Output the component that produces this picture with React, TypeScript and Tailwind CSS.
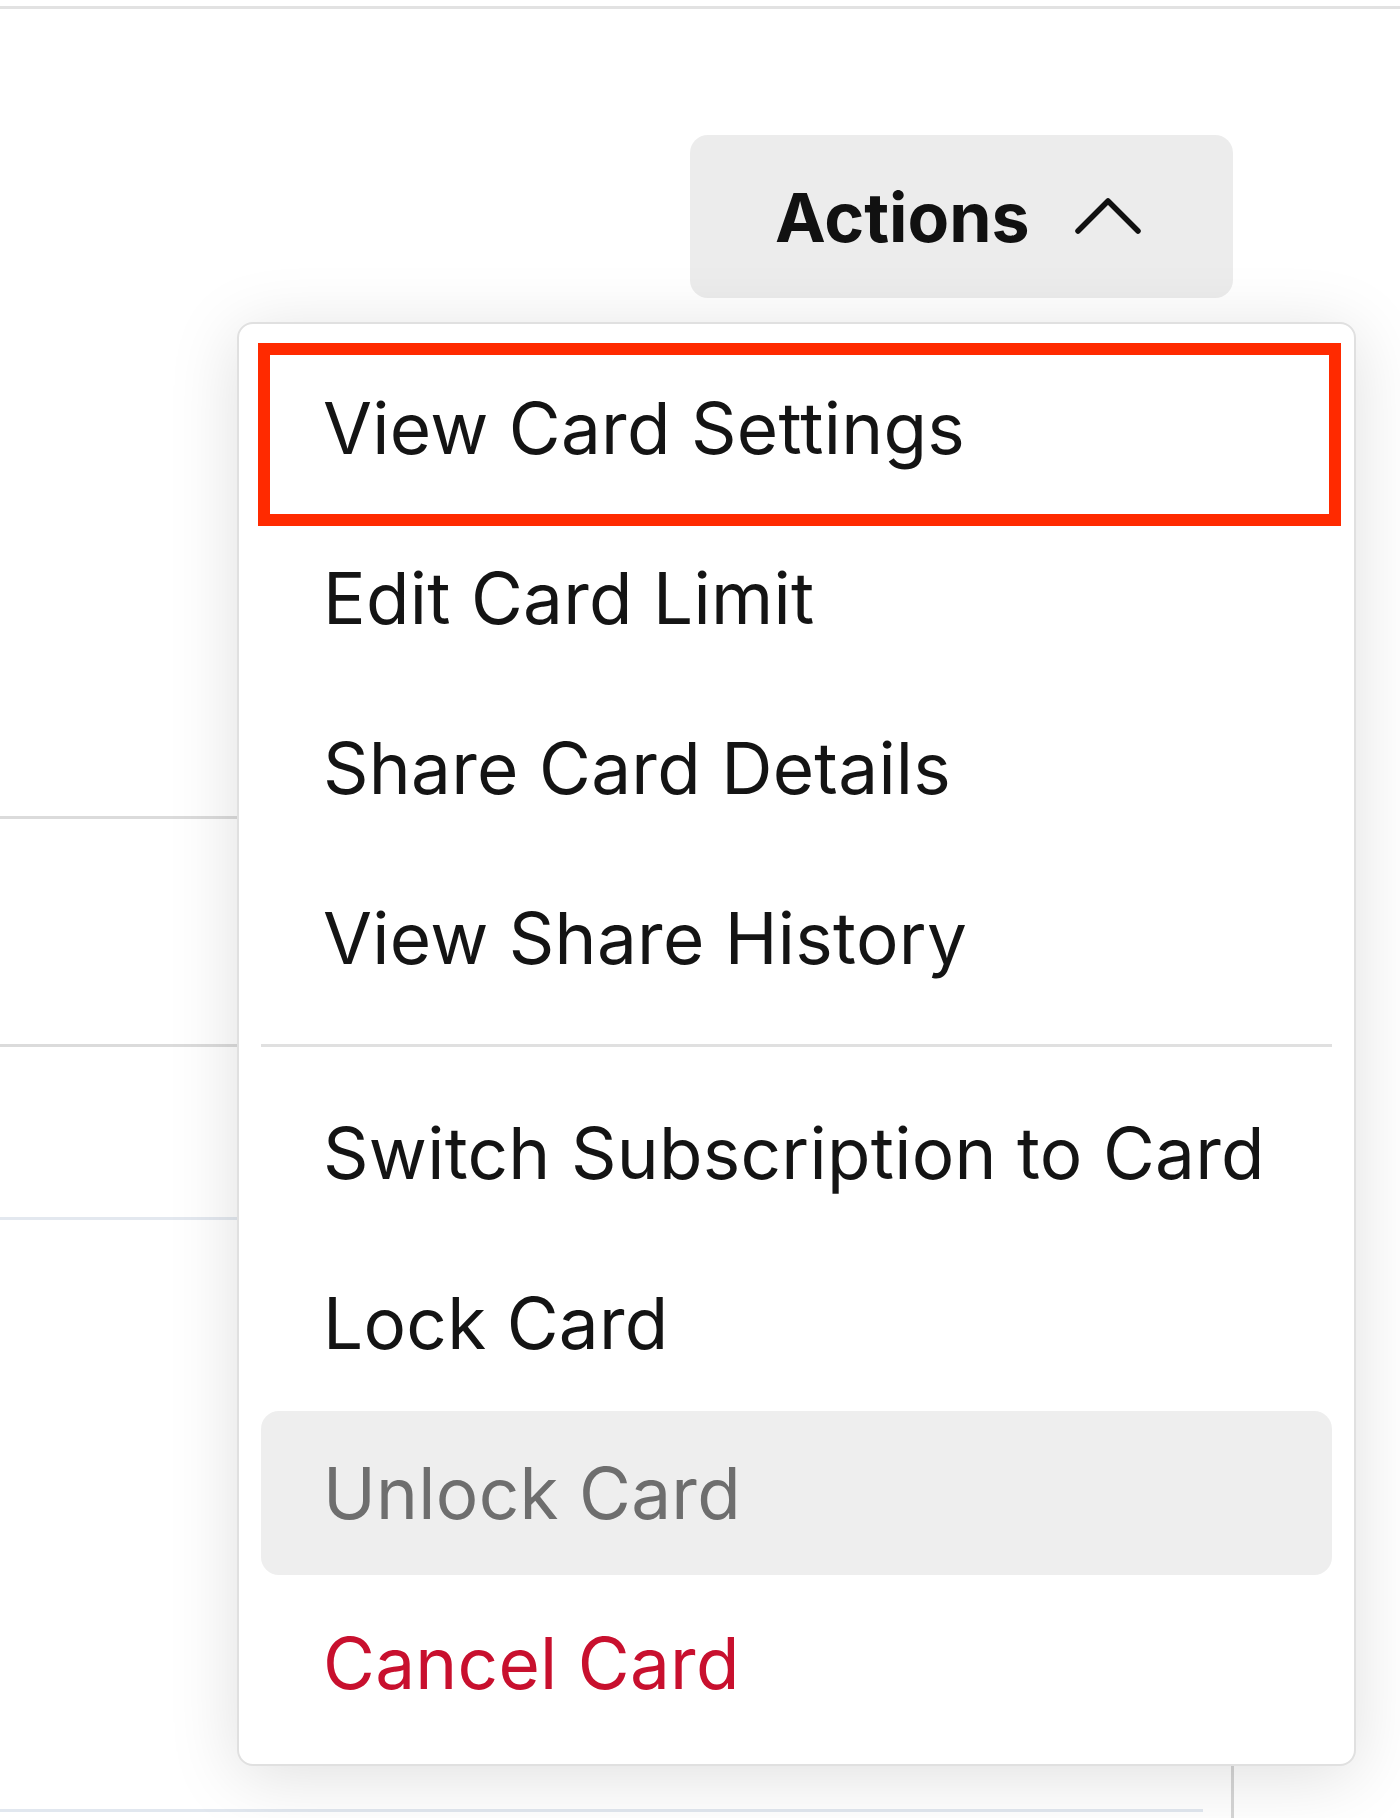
import React from "react";

const items = [
  "View Card Settings",
  "Edit Card Limit",
  "Share Card Details",
  "View Share History",
];
const items2 = ["Switch Subscription to Card", "Lock Card"];

function Row({ label, className = "" }: { label: string; className?: string }) {
  return (
    <div
      className={
        "h-[164px] leading-[164px] pl-[62px] rounded-[18px] text-[71px] tracking-[0.004em] whitespace-nowrap " +
        className
      }
    >
      {label}
    </div>
  );
}

export default function App() {
  return (
    <div className="relative w-[1400px] h-[1818px] bg-white overflow-hidden font-['Inter',sans-serif] text-[#141414]">
      {/* top rule */}
      <div className="pt-[6px]">
        <div className="h-[3px] bg-[#e2e2e2]" />
      </div>

      {/* header with button */}
      <div className="pt-[126px] pl-[690px]">
        <button className="flex h-[163px] w-[543px] items-center gap-[44px] rounded-[18px] bg-[#ececec] pl-[85px] text-[68px] font-bold leading-none text-[#111]">
          <span>Actions</span>
          <svg width="68" height="38" viewBox="0 0 68 38" fill="none" className="mt-[-2px]">
            <polyline
              points="4,34 34,4 64,34"
              stroke="#111"
              strokeWidth="5.5"
              strokeLinecap="round"
              strokeLinejoin="round"
            />
          </svg>
        </button>
      </div>

      {/* background table rows */}
      <div className="h-[518px]" />
      <div className="h-[3px] w-[1232px] bg-[#dbdbdb]" />
      <div className="h-[225px]" />
      <div className="h-[3px] w-[1232px] bg-[#dbdbdb]" />
      <div className="h-[170px]" />
      <div className="h-[3px] w-[1232px] bg-[#e3e8ef]" />
      <div className="flex h-[598px]">
        <div className="flex w-[1231px] flex-col justify-end">
          <div className="mb-[6px] h-[3px] w-[1203px] bg-[#e1e7ef]" />
        </div>
        <div className="w-[3px] bg-[#d6d6d6]" />
      </div>

      {/* dropdown menu */}
      <div className="absolute left-[237px] top-[322px] w-[1119px] rounded-[16px] border-2 border-[#e0e0e0] bg-white px-[22px] pt-[22px] pb-[19px] shadow-[0_10px_70px_rgba(0,0,0,0.13)]">
        <div className="flex flex-col gap-[6px]">
          {items.map((l, i) => (
            <div key={l} className="relative">
              <Row label={l} />
              {i === 0 && (
                <div className="pointer-events-none absolute left-[-3px] top-[-3px] right-[-9px] bottom-[-16px] border-[12px] border-[#ff2a00]" />
              )}
            </div>
          ))}
        </div>
        <div className="my-[24px] h-[3px] bg-[#e0e0e0]" />
        <div className="flex flex-col gap-[6px]">
          {items2.map((l) => (
            <Row key={l} label={l} />
          ))}
          <Row label="Unlock Card" className="bg-[#eeeeee] text-[#6e6e6e]" />
          <Row label="Cancel Card" className="text-[#c8102e]" />
        </div>
      </div>
    </div>
  );
}
